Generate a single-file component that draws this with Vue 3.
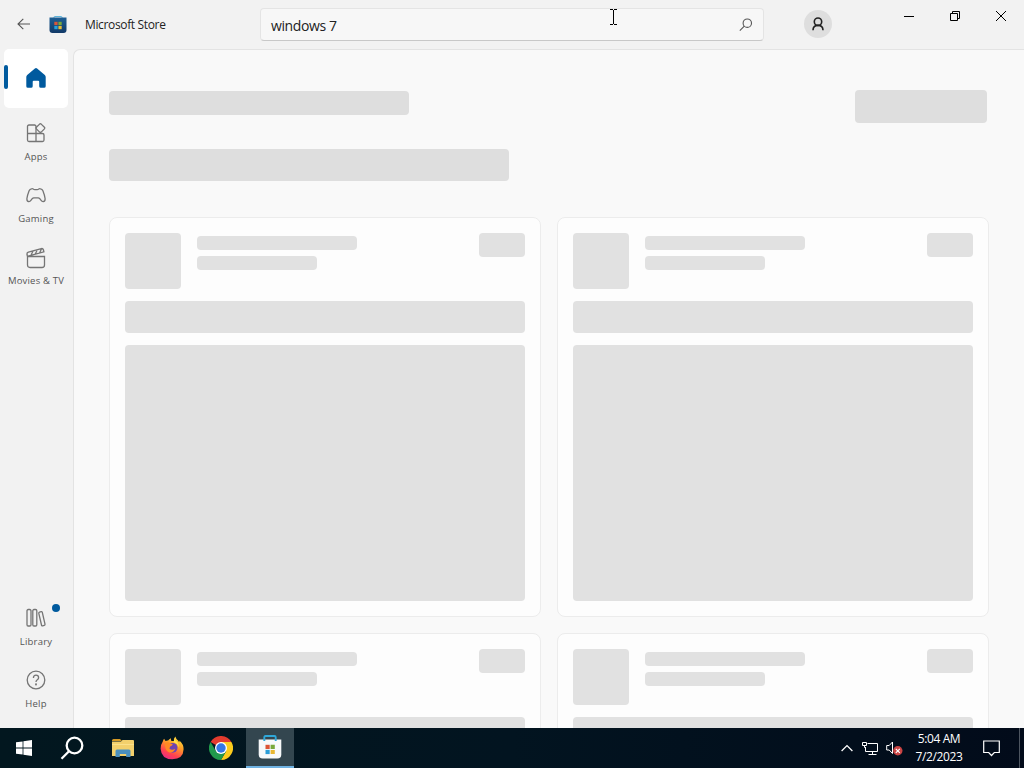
<template>
    <div class="desktop">
        <div class="store">
            <header class="titlebar">
                <svg class="back" width="14" height="12" viewBox="0 0 14 12">
                    <path d="M13 6H1.2M6.3 .8L1 6l5.3 5.2" fill="none" stroke="#555" stroke-width="1.1" />
                </svg>
                <svg class="logo" width="18" height="18" viewBox="0 0 18 18">
                    <defs>
                        <linearGradient id="bag" x1="0" y1="0" x2="0" y2="1">
                            <stop offset="0" stop-color="#1d5f94" />
                            <stop offset="1" stop-color="#123a68" />
                        </linearGradient>
                    </defs>
                    <path d="M5 2V1.200q0-.7.7-.7h6.600q.7 0 .7.700V2" fill="none" stroke="#5fb4da" />
                    <path d="M.5 1.500h17V14q0 3-3 3h-11q-3 0-3-3z" fill="url(#bag)" />
                    <path d="M5.300 5.800h3.300v3.300H5.300z" fill="#d8583a" />
                    <path d="M9.400 5.800h3.300v3.300H9.400z" fill="#7aa83c" />
                    <path d="M5.300 9.900h3.300v3.300H5.300z" fill="#28a0da" />
                    <path d="M9.400 9.900h3.300v3.300H9.400z" fill="#e5bd38" />
                </svg>
                <span class="title">Microsoft Store</span>
                <div class="search">
                    <span>windows 7</span>
                    <svg width="14" height="14" viewBox="0 0 14 14" fill="none" stroke="#555" stroke-width="1.1">
                        <circle cx="8.3" cy="5.2" r="4.2" />
                        <path d="M5.3 8.2L.8 12.7" />
                    </svg>
                </div>
                <div class="avatar">
                    <svg width="12" height="14" viewBox="0 0 12 14" fill="none" stroke="#222" stroke-width="1.6">
                        <circle cx="6" cy="4.7" r="3.7" />
                        <path d="M1 13.2c0-3 2-4.8 5-4.8s5 1.8 5 4.8" />
                    </svg>
                </div>
                <div class="controls">
                    <svg width="46" height="32" viewBox="0 0 46 32"><path d="M18 16.500h10" /></svg>
                    <svg width="46" height="32" viewBox="0 0 46 32"><path d="M18.500 13.500h7v7h-7zM20.500 13.500v-2h7v7h-2" /></svg>
                    <svg width="46" height="32" viewBox="0 0 46 32"><path d="M18 11l10 10M28 11L18 21" /></svg>
                </div>
            </header>

            <div class="body">
                <nav class="sidebar">
                    <div class="item active">
                        <svg width="20" height="20" viewBox="0 0 20 20">
                            <path d="M8.900 .5q1.100-.8 2.200 0l7.700 6.400q.9.800.9 2V18.200q0 1.600-1.600 1.600h-3.300q-1.600 0-1.600-1.600v-4.500q0-1-1-1H7.700q-1 0-1 1v4.500q0 1.600-1.600 1.600H1.900Q.3 19.800.3 18.200V8.900q0-1.200.9-2z" fill="#005a9e" />
                        </svg>
                    </div>
                    <div class="item">
                        <svg class="line" width="20" height="20" viewBox="0 0 20 20">
                            <path d="M9.500 2H3Q1.500 2 1.500 3.500v13.500q0 1.500 1.500 1.500h13.500q1.500 0 1.500-1.500v-5q0-1.500-1.500-1.500H1.500M10 18.500V3.500q0-1.500-1.500-1.500" />
                            <path d="M13.600 1.100q.8-.7 1.600 0l3.200 3.200q.7.800 0 1.600l-3.200 3.200q-.8.700-1.600 0l-3.200-3.200q-.7-.8 0-1.600z" />
                        </svg>
                        <span>Apps</span>
                    </div>
                    <div class="item">
                        <svg class="line" width="20" height="20" viewBox="0 0 20 20">
                            <path d="M5.500 3.800q1-.3 1.800.3.600.6 1.500.6h2.400q.9 0 1.500-.6.800-.6 1.800-.3 1.700.3 2.400 2 1.600 4 2.200 7.900.2 2.600-1.900 2.900-1.200.1-2.100-1.200l-1.300-1.700q-.7-.8-1.700-.8H7.900q-1 0-1.700.8l-1.300 1.700q-.9 1.300-2.100 1.200-2.100-.3-1.900-2.900.6-3.900 2.200-7.900.7-1.700 2.400-2z" />
                        </svg>
                        <span>Gaming</span>
                    </div>
                    <div class="item">
                        <svg class="line" width="20" height="22" viewBox="0 0 20 22">
                            <path d="M1.500 9.500h17v8.500q0 2.500-2.500 2.500H4q-2.500 0-2.500-2.500zM1.500 9.500L1 7.500Q.7 5.700 2.400 5.200L15.300 1.600q1.600-.4 2.100 1.200l.5 2L2 9.200M5 8.300l2-4.400M9.300 7.100l2-4.400M13.600 5.900l2-4.400" />
                        </svg>
                        <span class="wide">Movies &amp; TV</span>
                    </div>
                    <div class="item library">
                        <svg class="line" width="20" height="20" viewBox="0 0 20 20">
                            <rect x="1" y="1.5" width="4" height="16.500" rx="1.2" />
                            <rect x="6.800" y="1.5" width="4" height="16.500" rx="1.2" />
                            <path d="M12.800 5.300q-.2-1 .7-1.200l1.700-.4q.9-.2 1.100.7l2.700 11.700q.2 1-.7 1.200l-1.700.5q-.9.200-1.100-.8z" />
                        </svg>
                        <span>Library</span>
                        <i class="dot"></i>
                    </div>
                    <div class="item">
                        <svg class="line" width="20" height="20" viewBox="0 0 20 20">
                            <circle cx="10" cy="10" r="8.8" />
                            <path d="M7.400 7.900q0-2.700 2.600-2.700t2.600 2.500q0 1.200-1.300 2.100Q10 10.700 10 12.100" />
                            <circle cx="10" cy="14.400" r=".4" />
                        </svg>
                        <span>Help</span>
                    </div>
                </nav>

                <main class="content">
                    <div class="heading">
                        <div class="bone heading-title"></div>
                        <div class="bone heading-button"></div>
                    </div>
                    <div class="bone filter"></div>
                    <div class="cards">
                        <div v-for="n in 4" :key="n" class="card">
                            <div class="card-top">
                                <div class="bone thumb"></div>
                                <div class="lines">
                                    <div class="bone"></div>
                                    <div class="bone short"></div>
                                </div>
                                <div class="bone price"></div>
                            </div>
                            <div class="bone strip"></div>
                            <div class="bone preview"></div>
                        </div>
                    </div>
                </main>
            </div>
        </div>

        <footer class="taskbar">
            <div class="task">
                <svg width="16" height="16" viewBox="0 0 16 16" fill="#fff">
                    <path d="M0 2.300L6.600 1.400v6.200H0zM7.400 1.300L16 0v7.600H7.400zM0 8.400h6.600v6.200L0 13.700zM7.400 8.400H16V16l-8.600-1.200z" />
                </svg>
            </div>
            <div class="task">
                <svg width="24" height="24" viewBox="0 0 24 24" fill="none" stroke="#fff" stroke-width="2.3">
                    <circle cx="14.500" cy="9.500" r="7.800" />
                    <path d="M9 15.200L1.500 22.700" />
                </svg>
            </div>
            <div class="task apart">
                <svg width="22" height="20" viewBox="0 0 22 20">
                    <path d="M0 2.500Q0 1 1.500 1H8l2 2H0z" fill="#d69a25" />
                    <path d="M0 3.500h9l1.500-1.500H21q1 0 1 1V18H0z" fill="#f3d06c" />
                    <path d="M0 6h22v1H0z" fill="#fbe08a" />
                    <path d="M3.500 19v-6q0-1.500 1.500-1.500h12q1.500 0 1.500 1.500v6h-4.300v-3H7.800v3z" fill="#4a8fbd" />
                </svg>
            </div>
            <div class="task">
                <svg width="24" height="24" viewBox="0 0 24 24">
                    <defs>
                        <linearGradient id="fox" x1=".8" y1="0" x2=".3" y2="1">
                            <stop offset="0" stop-color="#ffe83d" />
                            <stop offset=".4" stop-color="#ff9a28" />
                            <stop offset=".75" stop-color="#ff4150" />
                            <stop offset="1" stop-color="#e72c83" />
                        </linearGradient>
                    </defs>
                    <path d="M2.900 5.200Q3.100 3.500 4.300 2.700q.3 1.500 1.300 2.400 1.100-.6 2.500-.5Q9.200 3 11 2.300q-.3 1.700.4 2.600l3.100.1Q13.200 2.700 15.300.6q.6 2.500 3 4.100l.8 1.600q.5-.8.300-1.700 4.200 3.700 4.200 8.600Q23.300 23 12.200 23.300 1.300 23 .6 12.700.6 8.500 2.900 5.200z" fill="url(#fox)" />
                    <circle cx="12.600" cy="11.800" r="4.900" fill="#7043b2" />
                    <path d="M5 7q3-1.700 5.300.5l2.500.8q-.3 1.600-2.600 2.100l-.8 2q2.300 2.300 5.700.3-1.700 4.800-6.200 3.500Q4.500 14.500 5 7z" fill="#ff8a24" />
                    <path d="M14 3q4.800 3 5 9-1.400-4.800-5.200-5.800z" fill="#ffe14a" />
                </svg>
            </div>
            <div class="task">
                <svg width="24" height="24" viewBox="0 0 24 24">
                    <path d="M12 12L1.600 6A12 12 0 0 1 22.400 6z" fill="#e33b2e" />
                    <path d="M12 12V6h10.400A12 12 0 0 1 12 24l5.200-9z" fill="#fccb1d" />
                    <path d="M12 12l5.200 3L12 24A12 12 0 0 1 1.600 6l5.200 9z" fill="#219a4c" />
                    <circle cx="12" cy="12" r="6" fill="#fff" />
                    <circle cx="12" cy="12" r="4.700" fill="#3577e5" />
                </svg>
            </div>
            <div class="task current">
                <svg width="24" height="24" viewBox="0 0 24 24">
                    <path d="M.7 4.500h22.600v15q0 4-4 4H4.700q-4 0-4-4z" fill="#f7f9fa" />
                    <path d="M6.300 6V2.200q0-1.200 1.200-1.200h9q1.200 0 1.200 1.200V6" fill="none" stroke="#2fa7d8" stroke-width="1.9" />
                    <path d="M7.500 9.800h4.200V14H7.500z" fill="#dc5435" />
                    <path d="M12.600 9.800h4.200V14h-4.200z" fill="#78a83a" />
                    <path d="M7.500 14.900h4.200v4.200H7.500z" fill="#2b9dd7" />
                    <path d="M12.600 14.900h4.200v4.200h-4.200z" fill="#e8b732" />
                </svg>
            </div>

            <div class="tray">
                <svg width="12" height="8" viewBox="0 0 12 8" fill="none" stroke="#fff" stroke-width="1.3">
                    <path d="M.6 7L6 1.600 11.400 7" />
                </svg>
                <svg class="net" width="17" height="15" viewBox="0 0 17 15" fill="none" stroke="#fff">
                    <path d="M5.500 2.500h10v8h-12V6M10.500 10.500v3M6.500 13.500h8M.5 1.500h4v3h-4zM2.500 4.500v2h1" />
                </svg>
                <svg class="sound" width="17" height="16" viewBox="0 0 17 16">
                    <path d="M.7 5.500h2.500L6.500 2v11.500L3.200 10H.7z" fill="none" stroke="#fff" />
                    <circle cx="11.800" cy="10.800" r="4.700" fill="#cb4444" />
                    <path d="M9.800 8.800l4 4M13.800 8.800l-4 4" stroke="#fff" stroke-width="1.2" />
                </svg>
                <div class="clock">
                    <span>5:04 AM</span>
                    <span>7/2/2023</span>
                </div>
                <svg class="notes" width="17" height="17" viewBox="0 0 17 17" fill="none" stroke="#fff" stroke-width="1.2">
                    <path d="M.7 1h15.600v11.500h-5L8.500 15.500l-2.800-3h-5z" />
                </svg>
                <i class="peek"></i>
            </div>
        </footer>

        <svg class="cursor" width="7" height="16" viewBox="0 0 7 16" fill="none" stroke="#000">
            <path d="M0 .5h3M4 .5h3M3.500 1v14M0 15.500h3M4 15.500h3" />
        </svg>
    </div>
</template>

<script setup>
</script>

<style>
body {
    margin: 0;
    overflow: hidden;
}
</style>

<style scoped>
.desktop {
    position: relative;
    display: flex;
    flex-direction: column;
    width: 1024px;
    height: 768px;
    overflow: hidden;
    font-family: "Open Sans", "Noto Sans", sans-serif;
    color: #222;
}
.desktop svg {
    display: block;
    flex: none;
}
.store {
    display: flex;
    flex-direction: column;
    height: 728px;
    background: #f2f2f2;
}
.titlebar {
    display: flex;
    align-items: flex-start;
    height: 49px;
    flex: none;
}
.back {
    margin: 18px 0 0 17px;
}
.logo {
    margin: 16px 0 0 18px;
}
.title {
    width: 176px;
    margin: 15px 0 0 18px;
    font-size: 12px;
    line-height: 20px;
    letter-spacing: -.35px;
    white-space: nowrap;
}
.search {
    box-sizing: border-box;
    display: flex;
    justify-content: space-between;
    align-items: center;
    width: 504px;
    height: 33px;
    margin-top: 8px;
    margin-left: -1px;
    padding: 1px 10px 0;
    background: #f7f7f7;
    border: 1px solid #e4e4e4;
    border-bottom-color: #c8c8c8;
    border-radius: 4px;
    font-size: 14px;
    letter-spacing: -.4px;
}
.avatar {
    display: flex;
    justify-content: center;
    align-items: center;
    width: 28px;
    height: 28px;
    margin: 10px 0 0 40px;
    background: #dedede;
    border-radius: 50%;
}
.controls {
    display: flex;
    margin-left: auto;
    fill: none;
    stroke: #000;
}
.body {
    display: flex;
    flex: 1;
    min-height: 0;
}
.sidebar {
    box-sizing: border-box;
    display: flex;
    flex-direction: column;
    gap: 4px;
    width: 73px;
    padding: 0 5px 12px 4px;
}
.item {
    position: relative;
    box-sizing: border-box;
    display: flex;
    flex-direction: column;
    align-items: center;
    width: 64px;
    height: 58px;
    padding-top: 12px;
    font-size: 9.5px;
    line-height: 12px;
    letter-spacing: .2px;
    color: #555;
}
.item span {
    margin-top: 8px;
    white-space: nowrap;
}
.item .wide {
    margin-top: 6px;
}
.active {
    height: 59px;
    margin-bottom: -1px;
    padding-top: 19px;
    background: #fff;
    border-radius: 5px;
}
.active::before {
    content: "";
    position: absolute;
    left: 0;
    top: 16px;
    width: 4px;
    height: 24px;
    background: #005a9e;
    border-radius: 2px;
}
.line {
    fill: none;
    stroke: #757575;
    stroke-width: 1.3;
}
.library {
    margin-top: auto;
}
.dot {
    position: absolute;
    right: 8px;
    top: 8px;
    width: 8px;
    height: 8px;
    background: #005a9e;
    border-radius: 50%;
}
.content {
    box-sizing: border-box;
    flex: 1;
    padding: 40px 35px 0;
    overflow: hidden;
    background: #f9f9f9;
    border: 1px solid #e3e3e3;
    border-width: 1px 0 0 1px;
    border-top-left-radius: 7px;
}
.bone {
    background: #e1e1e1;
    border-radius: 4px;
}
.heading {
    display: flex;
    justify-content: space-between;
    width: 878px;
}
.heading-title {
    width: 300px;
    height: 24px;
    margin-top: 1px;
    background: #dedede;
}
.heading-button {
    width: 132px;
    height: 33px;
    background: #dedede;
}
.filter {
    width: 400px;
    height: 32px;
    margin-top: 26px;
    background: #dedede;
}
.cards {
    display: grid;
    grid-template-columns: 432px 432px;
    gap: 16px;
    margin-top: 36px;
}
.card {
    box-sizing: border-box;
    display: flex;
    flex-direction: column;
    gap: 12px;
    height: 400px;
    padding: 15px;
    background: #fdfdfd;
    border: 1px solid #ececec;
    border-radius: 8px;
}
.card-top {
    display: flex;
    height: 56px;
}
.thumb {
    width: 56px;
}
.lines {
    display: flex;
    flex-direction: column;
    gap: 6px;
    padding: 3px 0 0 16px;
}
.lines .bone {
    width: 160px;
    height: 14px;
}
.lines .short {
    width: 120px;
}
.price {
    width: 46px;
    height: 24px;
    margin-left: auto;
}
.strip {
    height: 32px;
}
.preview {
    height: 256px;
}
.taskbar {
    display: flex;
    height: 40px;
    background: linear-gradient(90deg, #02171f, #021420 50%, #020b1a);
}
.task {
    display: flex;
    justify-content: center;
    align-items: center;
    width: 48px;
    height: 40px;
    margin-right: 1px;
}
.task:first-child {
    margin-right: 0;
}
.apart {
    margin-left: 2px;
}
.current {
    box-sizing: border-box;
    background: #33464f;
    border-bottom: 2px solid #6fb2e2;
}
.tray {
    display: flex;
    align-items: center;
    margin-left: auto;
}
.net {
    margin-left: 9px;
}
.sound {
    margin-left: 7px;
}
.clock {
    display: flex;
    flex-direction: column;
    align-items: center;
    width: 60px;
    margin-left: 6px;
    color: #fff;
    font-size: 12px;
    line-height: 18px;
    letter-spacing: -.4px;
    white-space: nowrap;
}
.notes {
    margin-left: 14px;
}
.peek {
    width: 1px;
    height: 40px;
    margin: 0 4px 0 19px;
    background: #4d5560;
}
.cursor {
    position: absolute;
    left: 610px;
    top: 9px;
}
</style>
